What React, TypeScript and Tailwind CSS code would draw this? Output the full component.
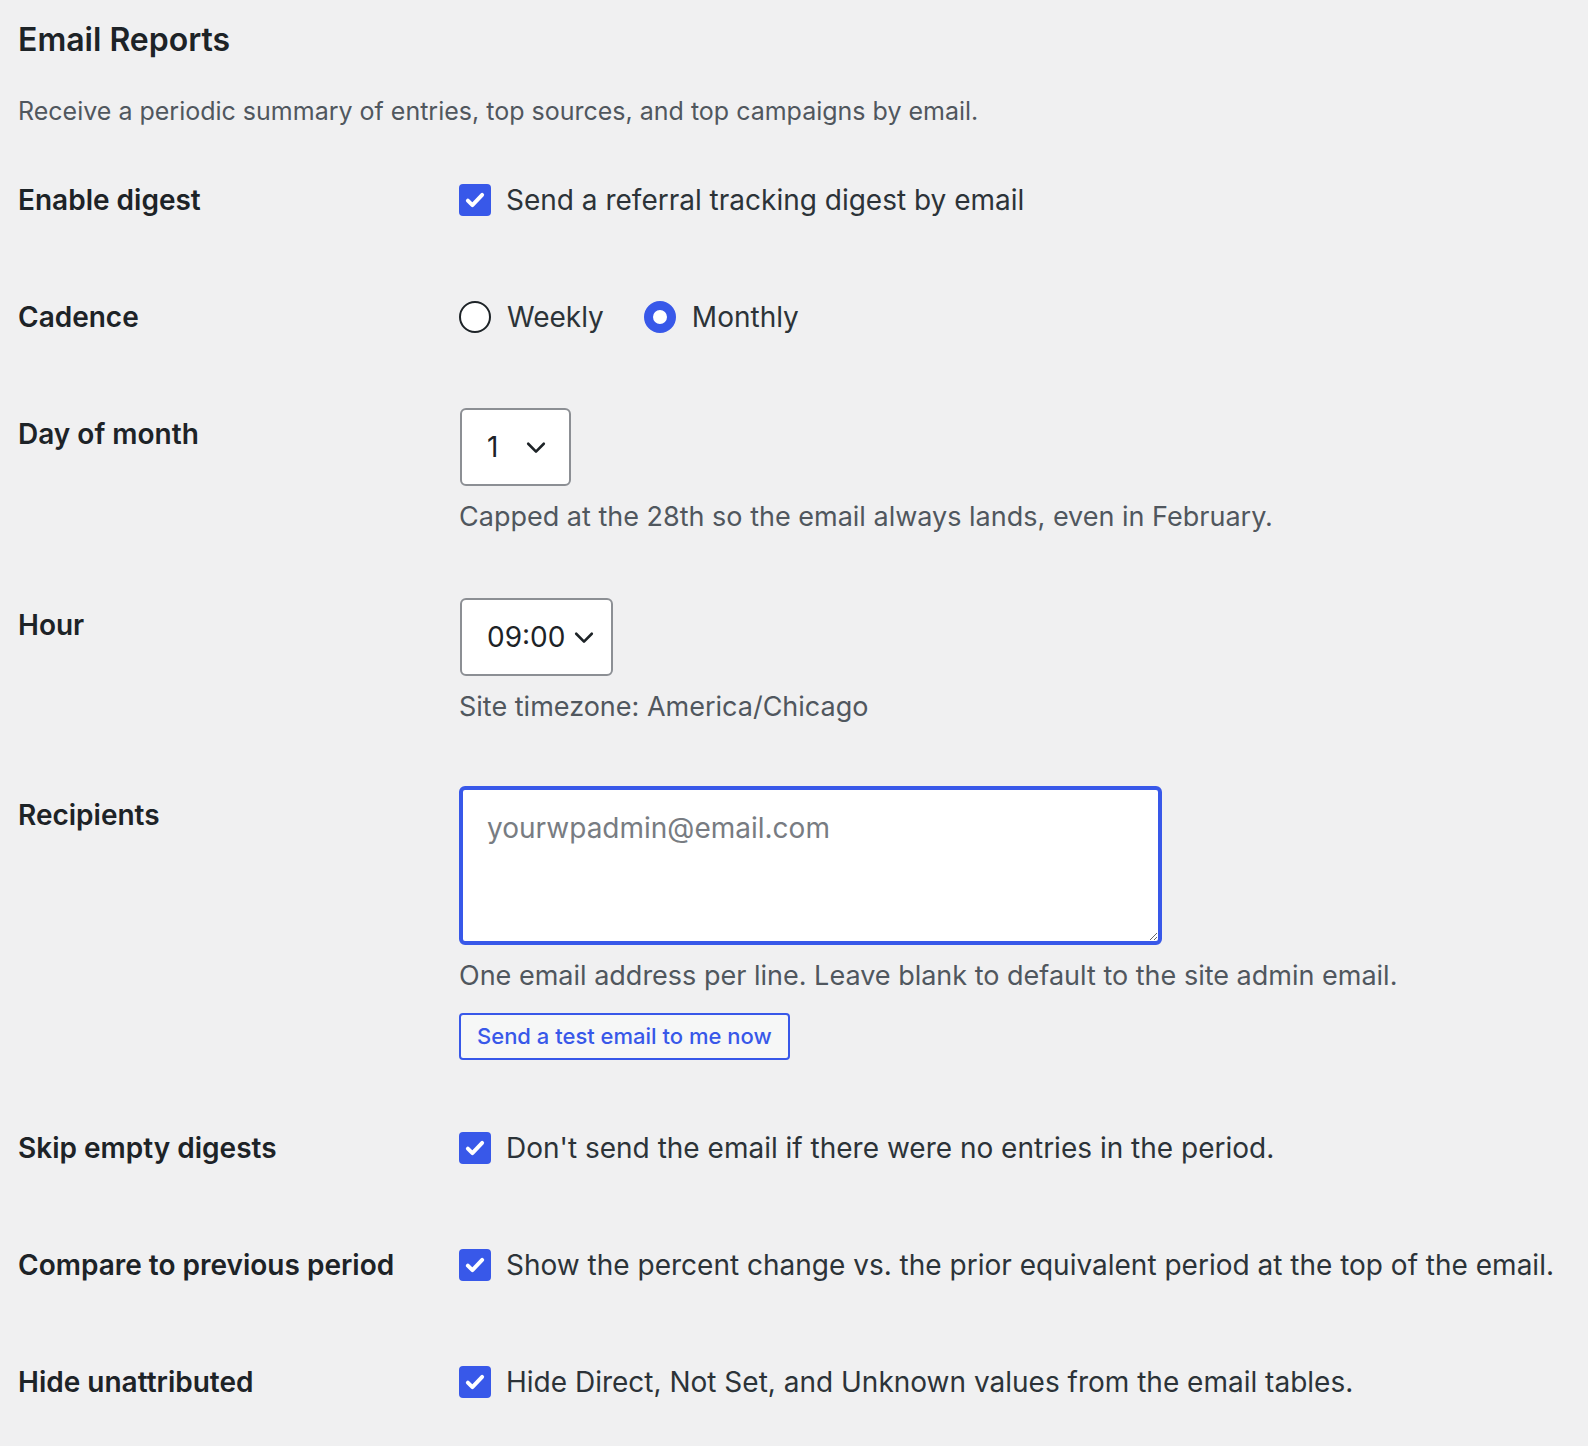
import React from 'react'

const Check = () => (
    <span className="flex h-[32px] w-[32px] shrink-0 items-center justify-center rounded-[4px] bg-[#3858e9]">
        <svg viewBox="0 0 20 20" className="h-[26px] w-[26px]" fill="none" stroke="white" strokeWidth="3" strokeLinecap="round" strokeLinejoin="round">
            <path d="M4.5 10.5l3.5 3.5 7.5-8" />
        </svg>
    </span>
)

const Chevron = () => (
    <svg viewBox="0 0 20 20" className="h-[26px] w-[26px]" fill="none" stroke="#1d2327" strokeWidth="2" strokeLinecap="round" strokeLinejoin="round">
        <path d="M4 7.5l6 6 6-6" />
    </svg>
)

const Row: React.FC<{ label: string; children: React.ReactNode }> = ({ label, children }) => (
    <div className="grid grid-cols-[441px_1fr]">
        <div className="text-[28px] font-semibold leading-[58px] text-[#1d2327]">{label}</div>
        <div>{children}</div>
    </div>
)

const CheckLine: React.FC<{ text: string }> = ({ text }) => (
    <div className="flex h-[58px] items-center gap-[15px] text-[28px] text-[#2c3338]">
        <Check />
        <span>{text}</span>
    </div>
)

const Help: React.FC<{ text: string }> = ({ text }) => (
    <p className="mt-[11px] text-[27px] leading-[40px] text-[#50575e]">{text}</p>
)

export default function App() {
    return (
        <div className="min-h-[1446px] bg-[#f0f0f1] pl-[18px] pt-[16px] font-[Inter,Roboto,sans-serif]">
            <h1 className="text-[32px] font-semibold leading-[48px] text-[#1d2327]">Email Reports</h1>
            <p className="mt-[25px] text-[25px] leading-[44px] text-[#50575e]">
                Receive a periodic summary of entries, top sources, and top campaigns by email.
            </p>

            <div className="mt-[38px] flex flex-col gap-[59px]">
                <Row label="Enable digest">
                    <CheckLine text="Send a referral tracking digest by email" />
                </Row>

                <Row label="Cadence">
                    <div className="flex h-[58px] items-center text-[28px] text-[#2c3338]">
                        <span className="h-[32px] w-[32px] rounded-full border-2 border-[#1d2327] bg-white" />
                        <span className="ml-[16px]">Weekly</span>
                        <span className="ml-[40px] h-[32px] w-[32px] rounded-full border-[9px] border-[#3858e9] bg-white" />
                        <span className="ml-[16px]">Monthly</span>
                    </div>
                </Row>

                <Row label="Day of month">
                    <div className="ml-[1px] mt-[3px] flex h-[78px] w-[111px] items-center justify-between rounded-[6px] border-2 border-[#8c8f94] bg-white pl-[25px] pr-[20px] text-[28px] text-[#1d2327]">
                        <span>1</span>
                        <Chevron />
                    </div>
                    <Help text="Capped at the 28th so the email always lands, even in February." />
                </Row>

                <Row label="Hour">
                    <div className="ml-[1px] mt-[2px] flex h-[78px] w-[153px] items-center justify-between rounded-[6px] border-2 border-[#8c8f94] bg-white pl-[25px] pr-[14px] text-[28px] text-[#1d2327]">
                        <span>09:00</span>
                        <Chevron />
                    </div>
                    <Help text="Site timezone: America/Chicago" />
                </Row>

                <Row label="Recipients">
                    <textarea
                        className="block h-[159px] w-[703px] resize-y rounded-[6px] border-4 border-[#3858e9] bg-white px-[24px] py-[18px] text-[28px] leading-[40px] text-[#1d2327] outline-none placeholder:text-[#787c82]"
                        placeholder="yourwpadmin@email.com"
                    />
                    <Help text="One email address per line. Leave blank to default to the site admin email." />
                    <button className="mt-[17px] h-[47px] rounded-[4px] border-2 border-[#3858e9] bg-[#f6f7f7] px-[16px] text-[22px] font-medium text-[#3858e9]">
                        Send a test email to me now
                    </button>
                </Row>

                <Row label="Skip empty digests">
                    <CheckLine text="Don't send the email if there were no entries in the period." />
                </Row>

                <Row label="Compare to previous period">
                    <CheckLine text="Show the percent change vs. the prior equivalent period at the top of the email." />
                </Row>

                <Row label="Hide unattributed">
                    <CheckLine text="Hide Direct, Not Set, and Unknown values from the email tables." />
                </Row>
            </div>
        </div>
    )
}
